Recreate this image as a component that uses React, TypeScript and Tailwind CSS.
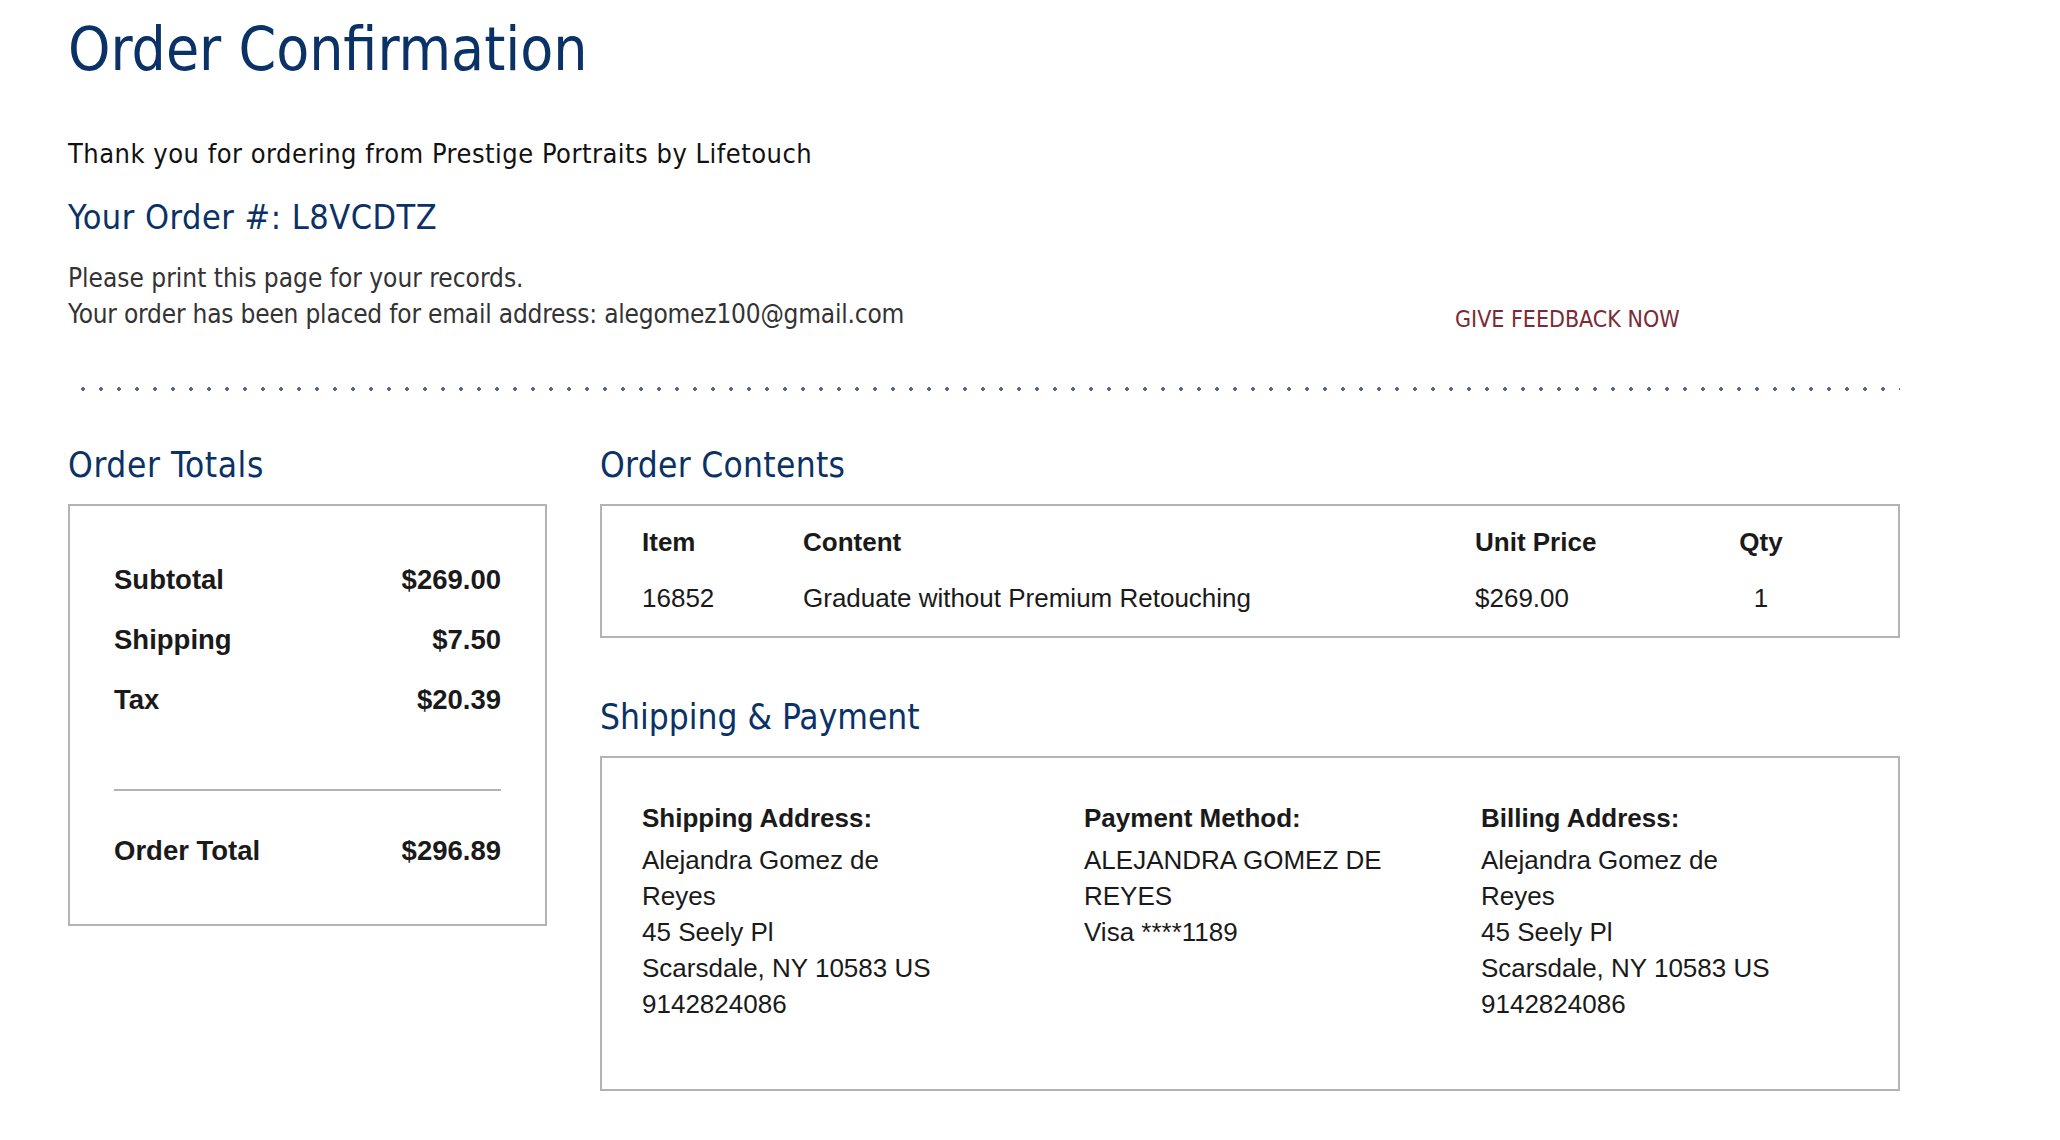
import React from 'react';

const totals = [
  { label: 'Subtotal', value: '$269.00' },
  { label: 'Shipping', value: '$7.50' },
  { label: 'Tax', value: '$20.39' },
];

const App: React.FC = () => {
  return (
    <div className="min-h-screen bg-white">
      <div className="ml-[68px] w-[1832px] pt-[9px] font-['DejaVu_Sans_Condensed','DejaVu_Sans',sans-serif]">
        {/* Page header */}
        <h1 className="text-[60px] leading-[80px] text-[#0b3266]">Order Confirmation</h1>
        <p className="mt-[47px] text-[27px] leading-[36px] tracking-[0.5px] text-[#111]">
          Thank you for ordering from Prestige Portraits by Lifetouch
        </p>
        <h2 className="mt-[23px] text-[34px] leading-[44px] tracking-[0.5px] text-[#0b3266]">Your Order #: L8VCDTZ</h2>

        <div className="mt-[21px] flex">
          <div className="w-[1387px] text-[26px] leading-[36px] text-[#333]">
            <p>Please print this page for your records.</p>
            <p className="tracking-[-0.2px]">Your order has been placed for email address: alegomez100@gmail.com</p>
          </div>
          <a href="#" className="mt-[44px] text-[23px] leading-[30px] text-[#7b2a36]">
            GIVE FEEDBACK NOW
          </a>
        </div>

        {/* Dotted divider */}
        <div className="mt-[53px] h-[4px] bg-[radial-gradient(circle,#55688f_1.6px,transparent_2.1px)] bg-[length:18px_4px] bg-[position:6px_0]" />

        <div className="mt-[52px] flex gap-[53px]">
          {/* Left column: Order Totals */}
          <div className="w-[479px]">
            <h3 className="text-[35px] leading-[44px] tracking-[0.6px] text-[#0b3266]">Order Totals</h3>
            <div className="mt-[17px] h-[422px] border-2 border-[#b3b3b3] px-[44px] pt-[56px] font-['Liberation_Sans',Arial,sans-serif] text-[27.5px] font-bold leading-[36px] text-[#1a1a1a]">
              <div className="flex flex-col gap-[24px]">
                {totals.map((t) => (
                  <div key={t.label} className="flex justify-between">
                    <span>{t.label}</span>
                    <span>{t.value}</span>
                  </div>
                ))}
              </div>
              <div className="mt-[71px] h-[2px] bg-[#b3b3b3]" />
              <div className="mt-[42px] flex justify-between">
                <span>Order Total</span>
                <span>$296.89</span>
              </div>
            </div>
          </div>

          {/* Right column */}
          <div className="w-[1300px]">
            <h3 className="text-[35px] leading-[44px] tracking-[0.3px] text-[#0b3266]">Order Contents</h3>
            <div className="mt-[17px] h-[134px] border-2 border-[#b3b3b3] pl-[40px] pt-[18px] font-['Liberation_Sans',Arial,sans-serif] text-[26px] leading-[36px] text-[#1a1a1a]">
              <div className="grid grid-cols-[161px_672px_264px_44px] font-bold">
                <span>Item</span>
                <span>Content</span>
                <span>Unit Price</span>
                <span className="text-center">Qty</span>
              </div>
              <div className="mt-[20px] grid grid-cols-[161px_672px_264px_44px]">
                <span>16852</span>
                <span>Graduate without Premium Retouching</span>
                <span>$269.00</span>
                <span className="text-center">1</span>
              </div>
            </div>

            <h3 className="mt-[57px] text-[35px] leading-[44px] text-[#0b3266]">Shipping &amp; Payment</h3>
            <div className="mt-[17px] h-[335px] border-2 border-[#b3b3b3] pl-[40px] pt-[42px] font-['Liberation_Sans',Arial,sans-serif] text-[26px] leading-[36px] text-[#1a1a1a]">
              <div className="grid grid-cols-[442px_397px_1fr]">
                <div>
                  <p className="font-bold">Shipping Address:</p>
                  <div className="mt-[6px]">
                    <p>Alejandra Gomez de</p>
                    <p>Reyes</p>
                    <p>45 Seely Pl</p>
                    <p>Scarsdale, NY 10583 US</p>
                    <p>9142824086</p>
                  </div>
                </div>
                <div>
                  <p className="font-bold">Payment Method:</p>
                  <div className="mt-[6px]">
                    <p>ALEJANDRA GOMEZ DE</p>
                    <p>REYES</p>
                    <p>Visa ****1189</p>
                  </div>
                </div>
                <div>
                  <p className="font-bold">Billing Address:</p>
                  <div className="mt-[6px]">
                    <p>Alejandra Gomez de</p>
                    <p>Reyes</p>
                    <p>45 Seely Pl</p>
                    <p>Scarsdale, NY 10583 US</p>
                    <p>9142824086</p>
                  </div>
                </div>
              </div>
            </div>
          </div>
        </div>
      </div>
    </div>
  );
};

export default App;
